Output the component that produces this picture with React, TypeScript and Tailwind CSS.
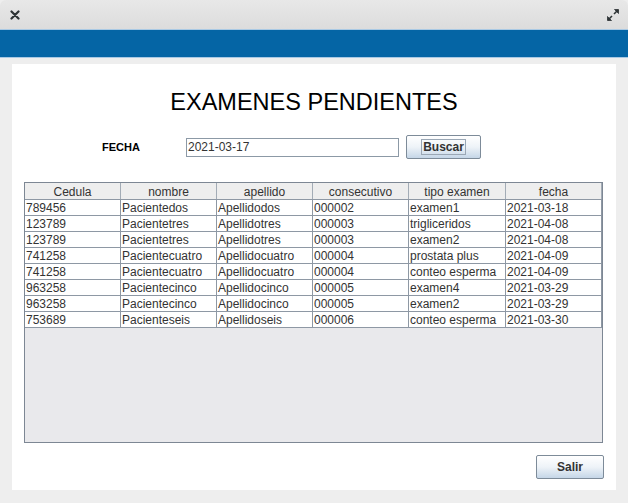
import React from 'react';

// ============================================
// 데이터
// ============================================

const COLUMNS = ['Cedula', 'nombre', 'apellido', 'consecutivo', 'tipo examen', 'fecha'];

const ROWS: string[][] = [
  ['789456', 'Pacientedos', 'Apellidodos', '000002', 'examen1', '2021-03-18'],
  ['123789', 'Pacientetres', 'Apellidotres', '000003', 'trigliceridos', '2021-04-08'],
  ['123789', 'Pacientetres', 'Apellidotres', '000003', 'examen2', '2021-04-08'],
  ['741258', 'Pacientecuatro', 'Apellidocuatro', '000004', 'prostata plus', '2021-04-09'],
  ['741258', 'Pacientecuatro', 'Apellidocuatro', '000004', 'conteo esperma', '2021-04-09'],
  ['963258', 'Pacientecinco', 'Apellidocinco', '000005', 'examen4', '2021-03-29'],
  ['963258', 'Pacientecinco', 'Apellidocinco', '000005', 'examen2', '2021-03-29'],
  ['753689', 'Pacienteseis', 'Apellidoseis', '000006', 'conteo esperma', '2021-03-30'],
];

const GRID = 'grid grid-cols-[96px_96px_96px_96px_97px_96px]';

// ============================================
// 아이콘
// ============================================

function CloseIcon() {
  return (
    <svg width="10" height="10" viewBox="0 0 10 10">
      <path d="M1.5 1.5 L8.5 8.5 M8.5 1.5 L1.5 8.5" stroke="#2e3436" strokeWidth="2.2" strokeLinecap="round" />
    </svg>
  );
}

function MaximizeIcon() {
  return (
    <svg width="14" height="14" viewBox="0 0 14 14">
      <path d="M8 6 L12 2" stroke="#2e3436" strokeWidth="1.6" />
      <path d="M8.5 1.5 L12.5 1.5 L12.5 5.5 Z" fill="#2e3436" stroke="#2e3436" strokeWidth="0.8" />
      <path d="M6 8 L2 12" stroke="#2e3436" strokeWidth="1.6" />
      <path d="M1.5 8.5 L1.5 12.5 L5.5 12.5 Z" fill="#2e3436" stroke="#2e3436" strokeWidth="0.8" />
    </svg>
  );
}

// ============================================
// 버튼
// ============================================

function SwingButton({ label, focused, className }: { label: string; focused?: boolean; className: string }) {
  return (
    <button
      className={`flex items-center justify-center rounded-[2px] border border-[#7d8b99] bg-gradient-to-b from-[#ffffff] via-[#eef3f8] to-[#c5d6e7] text-[12px] font-bold text-[#333333] ${className}`}
    >
      {focused ? (
        <span className="border border-[#9aa7b5] px-[1px] leading-[14px]">{label}</span>
      ) : (
        <span className="leading-[14px]">{label}</span>
      )}
    </button>
  );
}

// ============================================
// 메인 컴포넌트
// ============================================

export default function App() {
  return (
    <div
      className="flex h-[503px] w-[628px] flex-col bg-[#eeeeee]"
      style={{ fontFamily: '"Liberation Sans", Arial, sans-serif' }}
    >
      {/* 타이틀 바 */}
      <div className="flex h-[29px] items-center justify-between rounded-t-[6px] bg-gradient-to-b from-[#e8e8e8] to-[#dcdcdc] pl-[10px] pr-[8px]">
        <CloseIcon />
        <MaximizeIcon />
      </div>

      {/* 파란 띠 */}
      <div className="h-[29px] border-y border-[#a9c9e4] bg-[#0565a5]" />

      {/* 본문 */}
      <div className="flex-1 px-[12px] pb-[13px] pt-[6px]">
        <div className="flex h-full flex-col bg-white px-[12px] pb-[11px] pt-[24px]">
          <h1 className="text-center text-[23.5px] leading-[28px] text-black">EXAMENES PENDIENTES</h1>

          {/* 검색 */}
          <div className="mt-[19px] flex h-[24px] items-center">
            <span className="ml-[78px] w-[84px] text-[11px] font-bold text-black">FECHA</span>
            <div className="flex h-[19px] w-[213px] items-center border border-[#8c99a6] px-[1px] text-[12px] text-[#333333]">
              2021-03-17
            </div>
            <SwingButton label="Buscar" focused className="ml-[7px] h-[24px] w-[75px]" />
          </div>

          {/* 테이블 */}
          <div className="mt-[23px] flex h-[261px] w-[579px] flex-col border border-[#7d8794] bg-[#e9e9ec]">
            <div className={`${GRID} h-[17px] border-b border-[#8e98a4] bg-[#eeeeee]`}>
              {COLUMNS.map((c) => (
                <div key={c} className="border-r border-[#a3acb6] pt-[2px] text-center text-[12px] leading-[14px] text-[#333333]">
                  {c}
                </div>
              ))}
            </div>
            <div className="w-[577px] bg-white">
              {ROWS.map((r, i) => (
                <div key={i} className={`${GRID} h-[16px] border-b border-[#8e98a4]`}>
                  {r.map((v, j) => (
                    <div key={j} className="overflow-hidden whitespace-nowrap border-r border-[#8e98a4] pl-[1px] pt-[1px] text-[12px] leading-[14px] text-[#333333]">
                      {v}
                    </div>
                  ))}
                </div>
              ))}
            </div>
          </div>

          {/* 하단 */}
          <div className="mt-auto flex justify-end">
            <SwingButton label="Salir" className="h-[24px] w-[68px]" />
          </div>
        </div>
      </div>
    </div>
  );
}
